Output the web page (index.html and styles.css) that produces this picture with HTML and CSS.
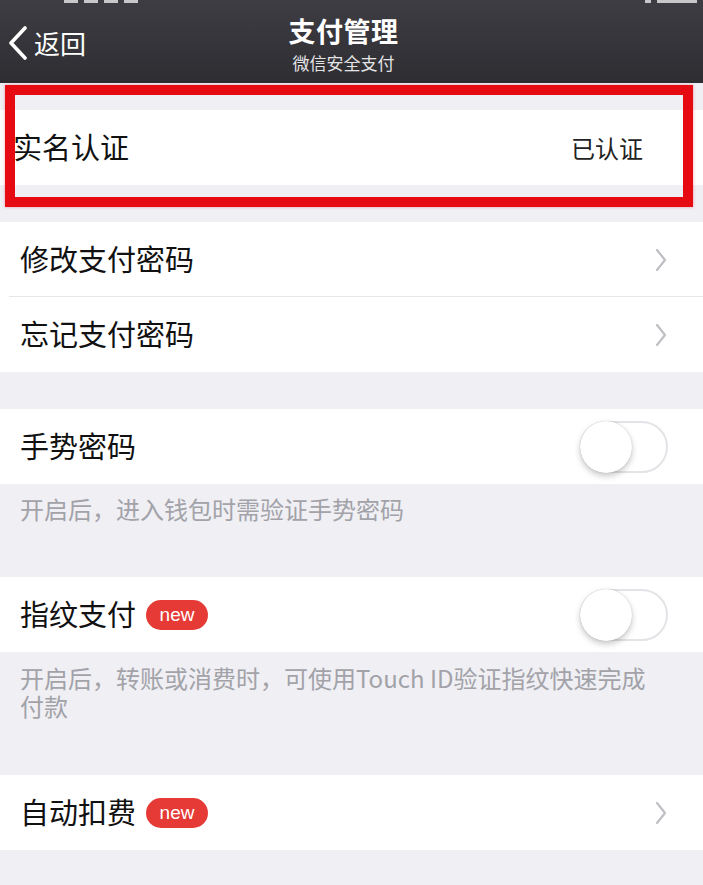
FILE: index.html
```html
<!DOCTYPE html>
<html lang="zh-CN">
<head>
<meta charset="utf-8">
<title>支付管理</title>
<link rel="stylesheet" href="styles.css">
</head>
<body>
<div class="page">
  <header class="navbar">
    <div class="statusbar">
      <span class="sb-left"><i></i><i></i><i></i><i></i></span>
      <span class="sb-right"><i></i><i></i></span>
    </div>
    <div class="navrow">
      <div class="back">
        <svg class="back-icon" width="22" height="34" viewBox="0 0 22 34"><path d="M18 2 L4 17 L18 32" fill="none" stroke="#fff" stroke-width="3.6" stroke-linecap="round" stroke-linejoin="round"/></svg>
        <span class="back-text">返回</span>
      </div>
      <div class="title">
        <div class="title-main">支付管理</div>
        <div class="title-sub">微信安全支付</div>
      </div>
    </div>
  </header>

  <div class="gap gap-first"></div>
  <div class="row row-auth">
    <span class="label">实名认证</span>
    <span class="value">已认证</span>
  </div>
  <div class="gap gap-auth"></div>

  <div class="group">
    <div class="row row-sep">
      <span class="label">修改支付密码</span>
      <svg class="chev" width="12" height="24" viewBox="0 0 12 24"><path d="M2 2 L10 12 L2 22" fill="none" stroke="#bfbfc4" stroke-width="2.2" stroke-linecap="round" stroke-linejoin="round"/></svg>
    </div>
    <div class="row">
      <span class="label">忘记支付密码</span>
      <svg class="chev" width="12" height="24" viewBox="0 0 12 24"><path d="M2 2 L10 12 L2 22" fill="none" stroke="#bfbfc4" stroke-width="2.2" stroke-linecap="round" stroke-linejoin="round"/></svg>
    </div>
  </div>
  <div class="gap gap-mid"></div>

  <div class="row">
    <span class="label">手势密码</span>
    <span class="toggle"><span class="knob"></span></span>
  </div>
  <div class="footer footer-one">开启后，进入钱包时需验证手势密码</div>

  <div class="row">
    <span class="label-wrap"><span class="label">指纹支付</span><span class="badge">new</span></span>
    <span class="toggle"><span class="knob"></span></span>
  </div>
  <div class="footer footer-two">开启后，转账或消费时，可使用Touch ID验证指纹快速完成付款</div>

  <div class="row">
    <span class="label-wrap"><span class="label">自动扣费</span><span class="badge">new</span></span>
    <svg class="chev" width="12" height="24" viewBox="0 0 12 24"><path d="M2 2 L10 12 L2 22" fill="none" stroke="#bfbfc4" stroke-width="2.2" stroke-linecap="round" stroke-linejoin="round"/></svg>
  </div>
  <div class="gap gap-end"></div>

  <div class="highlight"></div>
</div>
</body>
</html>
```

FILE: styles.css
```css
* { box-sizing: border-box; }

html, body {
  margin: 0;
  padding: 0;
  background: #efeff4;
}

body {
  font-family: "Noto Sans CJK SC", "Noto Sans", "Liberation Sans", sans-serif;
  color: #111;
}

.page {
  position: relative;
  width: 703px;
  height: 885px;
  overflow: hidden;
  background: #efeff4;
}

/* ---------- navbar ---------- */
.navbar {
  height: 83px;
  background: linear-gradient(#3e3d43, #2e2d32);
  color: #fff;
  display: flex;
  flex-direction: column;
}

.statusbar {
  height: 4px;
  overflow: hidden;
  display: flex;
  justify-content: space-between;
  padding: 0 6px 0 64px;
}

.statusbar span {
  display: flex;
  gap: 6px;
}

.statusbar i {
  display: block;
  width: 14px;
  height: 3px;
  background: rgba(235, 235, 238, 0.8);
}

.sb-right i:first-child { width: 6px; }
.sb-right i:last-child { width: 40px; }

.navrow {
  flex: 1;
  display: flex;
  align-items: center;
  position: relative;
}

.back {
  display: flex;
  align-items: center;
  padding-left: 7px;
  gap: 5px;
  margin-top: -2px;
}

.back-text {
  font-size: 26px;
  line-height: 30px;
  color: #fff;
}

.title {
  position: absolute;
  left: 0;
  right: 0;
  top: 0;
  text-align: center;
  padding-right: 16px;
}

.title-main {
  font-size: 27px;
  font-weight: 700;
  line-height: 34px;
  margin-top: 10px;
  letter-spacing: 0.5px;
}

.title-sub {
  font-size: 17px;
  line-height: 22px;
  color: #e4e4e7;
  margin-top: 4px;
}

/* ---------- list ---------- */
.gap { background: #efeff4; }
.gap-first { height: 27px; }
.gap-auth { height: 37px; }
.gap-mid { height: 37px; }
.gap-end { height: 40px; }

.row {
  height: 75px;
  background: #fff;
  display: flex;
  align-items: center;
  justify-content: space-between;
  padding: 0 35px 0 20px;
  position: relative;
}

.row-auth {
  padding-left: 13px;
  padding-right: 60px;
}

.row-sep::after {
  content: "";
  position: absolute;
  left: 9px;
  right: 0;
  bottom: 0;
  height: 1px;
  background: #e6e6ea;
}

.label {
  font-size: 29px;
  line-height: 36px;
  color: #111;
  margin-top: -3px;
}

.value {
  font-size: 24px;
  color: #222;
}

.label-wrap {
  display: flex;
  align-items: center;
}

.badge {
  margin-left: 10px;
  width: 62px;
  height: 30px;
  border-radius: 15px;
  background: #e53a36;
  color: #fff;
  font-family: "Liberation Sans", "Noto Sans", sans-serif;
  font-size: 19px;
  line-height: 30px;
  text-align: center;
}

.chev {
  display: block;
  margin-right: 1px;
}

/* ---------- toggle ---------- */
.toggle {
  width: 88px;
  height: 52px;
  border-radius: 26px;
  border: 2px solid #e4e4e8;
  background: #fff;
  display: flex;
  align-items: center;
  margin-top: 1px;
}

.knob {
  width: 52px;
  height: 52px;
  margin-left: -2px;
  border-radius: 50%;
  background: #fff;
  box-shadow: 0 3px 6px rgba(0, 0, 0, 0.22), 0 0 1px rgba(0, 0, 0, 0.25);
}

/* ---------- footers ---------- */
.footer {
  background: #efeff4;
  color: #a2a2a8;
  font-size: 24px;
  line-height: 28px;
  padding: 11px 43px 0 20px;
}

.footer-one { height: 93px; }
.footer-two { height: 123px; padding-top: 12px; }

/* ---------- annotation overlay ---------- */
.highlight {
  position: absolute;
  left: 5px;
  top: 85px;
  width: 688px;
  height: 122px;
  border: 10px solid #e60a12;
  box-shadow: 0 0 3px rgba(230, 10, 18, 0.35);
}
```
